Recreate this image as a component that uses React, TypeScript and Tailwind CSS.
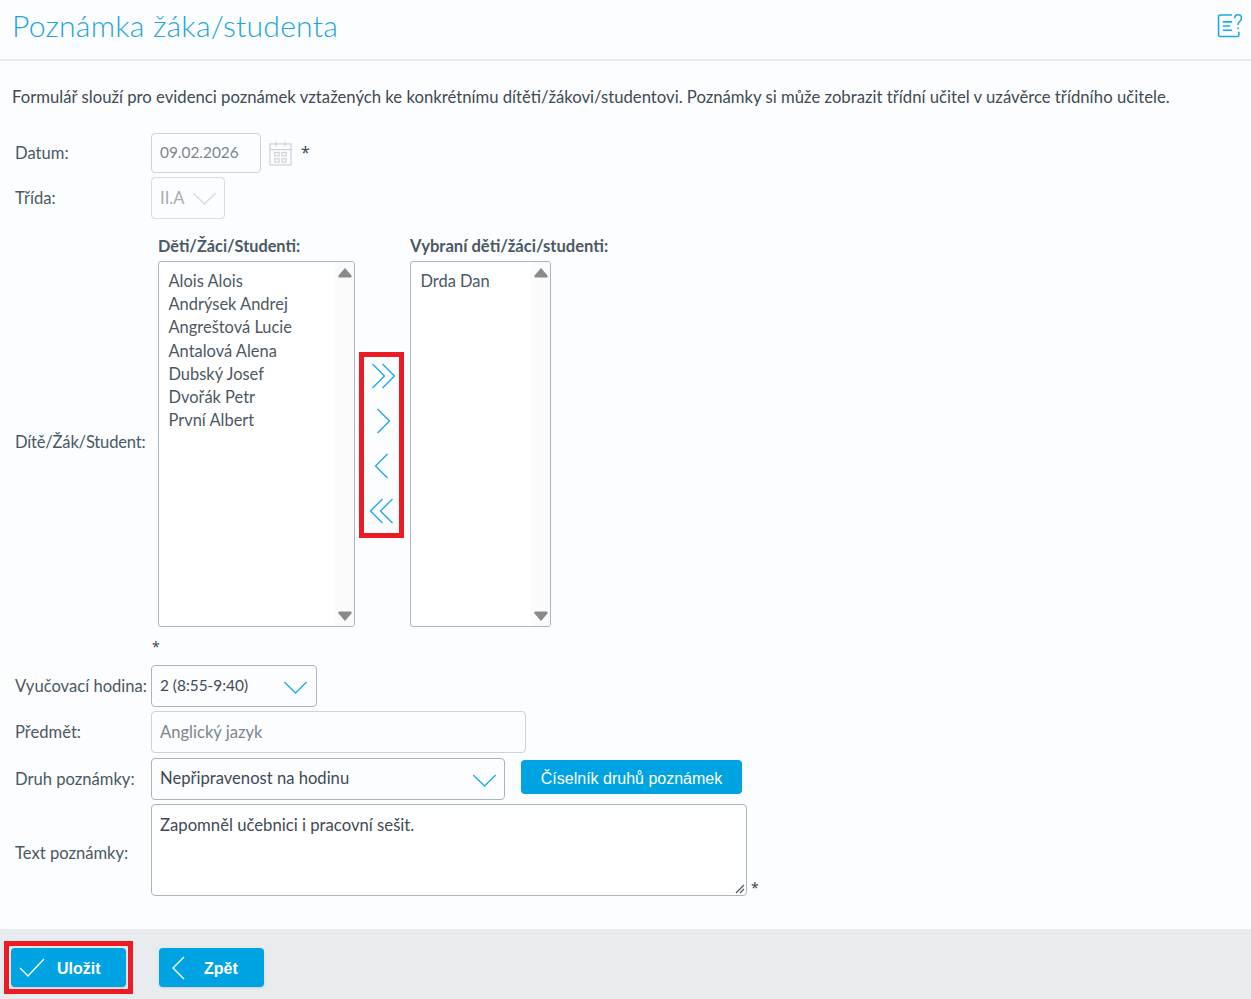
import React from 'react';

const font = { fontFamily: '"Lato", "Noto Sans", sans-serif' };

const Chevron = ({ className }: { className: string }) => (
  <svg viewBox="0 0 26 14" fill="none" stroke="currentColor" strokeWidth="1.4" className={className}>
    <path d="M1 1l12 12L25 1" />
  </svg>
);

const ScrollTrack = () => (
  <div className="w-[19px] h-full bg-[#fbfbfb] flex flex-col justify-between items-center pt-[6px] pb-[5px]">
    <svg viewBox="0 0 14 10" className="w-[14px] h-[10px] fill-[#8a8a8a]"><path d="M7 0L13.500 7.500Q14.200 9.500 12.500 9.500H1.500Q-.2 9.500.5 7.500z" /></svg>
    <svg viewBox="0 0 14 10" className="w-[14px] h-[10px] fill-[#8a8a8a]"><path d="M7 10L13.500 2.500Q14.200.5 12.500.5H1.500Q-.2.5.5 2.500z" /></svg>
  </div>
);

const ListBox = ({ items, width }: { items: string[]; width: string }) => (
  <div className={`${width} h-[366px] border border-[#a9b6bd] rounded-[3px] bg-white flex overflow-hidden`}>
    <div className="flex-1 pl-[9.5px] pt-[8px] text-[16.45px] leading-[23.2px] text-[#4b5863]">
      {items.map(name => (
        <div key={name}>{name}</div>
      ))}
    </div>
    <ScrollTrack />
  </div>
);

const Label = ({ children, className = '' }: { children: React.ReactNode; className?: string }) => (
  <div className={`w-[151px] shrink-0 pl-[15px] text-[16.6px] text-[#4b5863] whitespace-nowrap ${className}`}>{children}</div>
);

const MoveIcon = ({ d }: { d: string }) => (
  <svg viewBox="0 0 26 26" fill="none" stroke="#1ea9e6" strokeWidth="1.4" className="w-[26px] h-[26px]">
    <path d={d} />
  </svg>
);

const App: React.FC = () => {
  return (
    <div className="w-full h-[999px] bg-[#fbfdfe] flex flex-col overflow-hidden text-[#4b5863]" style={font}>
      <header className="h-[61px] shrink-0 border-b-2 border-[#e9ecee] flex items-center justify-between pl-[12px] pr-[9px] pb-[9px]">
        <h1 className="text-[30.2px] font-light text-[#1ea5de] leading-none tracking-[0.2px]">Poznámka žáka/studenta</h1>
        <svg viewBox="0 0 24 24" fill="none" stroke="#1ea9e6" strokeWidth="1.500" className="w-[25px] h-[25px]">
          <path d="M14.500 2H3a1.500 1.500 0 0 0-1.500 1.500V21A1.500 1.500 0 0 0 3 22.500h16.500A1.500 1.500 0 0 0 21 21v-3" />
          <path d="M5.500 8.500h9M5.500 12.500h7M5.500 16.500h9" />
          <path d="M17 5c0-4.500 6.500-4.500 6.500 0 0 3-3.300 3-3.300 6.500M20.200 14v1.500" />
        </svg>
      </header>

      <p className="mt-[25px] pl-[12px] text-[16.7px] leading-[23px] text-[#3f4a55] whitespace-nowrap">
        Formulář slouží pro evidenci poznámek vztažených ke konkrétnímu dítěti/žákovi/studentovi. Poznámky si může zobrazit třídní učitel v uzávěrce třídního učitele.
      </p>

      <form className="flex flex-col flex-1">
        <div className="flex items-center mt-[24px]">
          <Label>Datum:</Label>
          <div className="w-[110px] h-[40px] border border-[#cdd3d7] rounded-[4px] flex items-center pl-[8px] text-[15.4px] text-[#7b868e]">09.02.2026</div>
          <svg viewBox="0 0 24 26" fill="none" stroke="#cfd4d7" strokeWidth="1.300" className="w-[23px] h-[25px] ml-[8px]">
            <rect x="1" y="3" width="22" height="22" />
            <path d="M1 9h22M7 0.500v5M17 0.500v5" />
            <rect x="6" y="12" width="4.500" height="3.500" />
            <rect x="13.500" y="12" width="4.500" height="3.500" />
            <rect x="6" y="18.500" width="4.500" height="3.500" />
            <rect x="13.500" y="18.500" width="4.500" height="3.500" />
          </svg>
          <span className="ml-[9px] mb-[3px] text-[16px] text-[#3f4a55] [font-family:'Noto_Sans',sans-serif]">*</span>
        </div>

        <div className="flex items-center mt-[4px]">
          <Label>Třída:</Label>
          <div className="w-[74px] h-[42px] border border-[#d8dcdf] rounded-[4px] flex items-center pl-[8px] text-[16.6px] text-[#a5adb3]">
            II.A
            <Chevron className="w-[25px] h-[13px] ml-[8px] mt-[1px] text-[#d8dcdf]" />
          </div>
        </div>

        <div className="flex items-center mt-[15px]">
          <Label className="mt-[24px] tracking-[-0.2px]">Dítě/Žák/Student:</Label>
          <div className="flex items-stretch pl-[7px]">
            <div>
              <div className="text-[16.3px] font-bold leading-[23px] pb-[4px] text-[#4b5863]">Děti/Žáci/Studenti:</div>
              <ListBox width="w-[197px]" items={['Alois Alois', 'Andrýsek Andrej', 'Angreštová Lucie', 'Antalová Alena', 'Dubský Josef', 'Dvořák Petr', 'První Albert']} />
            </div>
            <div className="w-[45px] h-[186px] ml-[4px] mt-[118px] pb-[4px] border-[5px] border-[#ed1c24] flex flex-col items-center justify-center gap-[19px]">
              <MoveIcon d="M3.500 1l12 12-12 12M13.500 1l12 12-12 12" />
              <MoveIcon d="M8.500 1l12 12-12 12" />
              <MoveIcon d="M18.500 1L6.500 13l12 12" />
              <MoveIcon d="M13.500 1L1.500 13l12 12M23.500 1L11.500 13l12 12" />
            </div>
            <div className="ml-[6px]">
              <div className="text-[16.6px] font-bold leading-[23px] pt-[1px] pb-[3px] text-[#4b5863] whitespace-nowrap">Vybraní děti/žáci/studenti:</div>
              <ListBox width="w-[141px]" items={['Drda Dan']} />
            </div>
          </div>
        </div>

        <div className="pl-[152px] h-[38px] pt-[10px] text-[14px] leading-[20px] text-[#3f4a55] [font-family:'Noto_Sans',sans-serif]">*</div>

        <div className="flex items-center">
          <Label>Vyučovací hodina:</Label>
          <div className="w-[166px] h-[42px] border border-[#a9b6bd] rounded-[4px] flex items-center justify-between pl-[8px] pr-[8px] pb-[1px] text-[15.4px] text-[#3f4a55]">
            2 (8:55-9:40)
            <Chevron className="w-[25px] h-[13px] mt-[3px] text-[#1ea9e6]" />
          </div>
        </div>

        <div className="flex items-center mt-[4px]">
          <Label>Předmět:</Label>
          <div className="w-[375px] h-[42px] border border-[#cdd3d7] rounded-[4px] flex items-center pl-[8px] text-[16.6px] text-[#7b868e]">Anglický jazyk</div>
        </div>

        <div className="flex items-center mt-[5px]">
          <Label>Druh poznámky:</Label>
          <div className="w-[354px] h-[42px] border border-[#a9b6bd] rounded-[4px] flex items-center justify-between pl-[8px] pr-[7px] pb-[2px] text-[16.6px] text-[#3f4a55]">
            Nepřipravenost na hodinu
            <Chevron className="w-[25px] h-[13px] mt-[4px] text-[#1ea9e6]" />
          </div>
          <button type="button" className="ml-[16px] mb-[4px] pt-[4px] w-[221px] h-[34px] bg-[#00a3e2] rounded-[4px] text-white text-[16px] [font-family:'Liberation_Sans',sans-serif]">
            Číselník druhů poznámek
          </button>
        </div>

        <div className="flex items-center mt-[4px]">
          <Label className="mt-[6px]">Text poznámky:</Label>
          <div className="relative w-[596px] h-[92px] border border-[#a9b6bd] rounded-[4px] bg-white pl-[8px] pt-[8px] text-[16.7px] leading-[24px] text-[#3f4a55]">
            Zapomněl učebnici i pracovní sešit.
            <svg viewBox="0 0 10 10" stroke="#555" strokeWidth="1.200" className="absolute right-[1px] bottom-[1px] w-[10px] h-[10px]">
              <path d="M1 9l8-8M5 9l4-4" />
            </svg>
          </div>
          <span className="ml-[4px] mt-[75px] text-[14px] leading-[17px] text-[#3f4a55] [font-family:'Noto_Sans',sans-serif]">*</span>
        </div>

        <footer className="mt-auto h-[70px] bg-[#e9ecee] flex items-start pt-[12px] pl-[4px]">
          <div className="border-[5px] border-[#ed1c24] p-[2px]">
            <button type="button" className="w-[115px] h-[39px] bg-[#00a3e2] rounded-[4px] shadow-sm flex items-center text-white text-[17px] font-bold pl-[8px]">
              <svg viewBox="0 0 26 20" fill="none" stroke="white" strokeWidth="1.400" className="w-[26px] h-[20px]">
                <path d="M1 10l8 8L25 1" />
              </svg>
              <span className="ml-[12px] pt-[2px] [font-family:'Liberation_Sans',sans-serif] text-[16px]">Uložit</span>
            </button>
          </div>
          <button type="button" className="ml-[26px] mt-[7px] w-[105px] h-[39px] bg-[#00a3e2] rounded-[4px] shadow-sm flex items-center text-white font-bold pl-[12px]">
            <svg viewBox="0 0 14 24" fill="none" stroke="white" strokeWidth="1.400" className="w-[14px] h-[24px]">
              <path d="M13 1L2 12l11 11" />
            </svg>
            <span className="ml-[19px] pt-[2px] [font-family:'Liberation_Sans',sans-serif] text-[16px]">Zpět</span>
          </button>
        </footer>
      </form>
    </div>
  );
};

export default App;
